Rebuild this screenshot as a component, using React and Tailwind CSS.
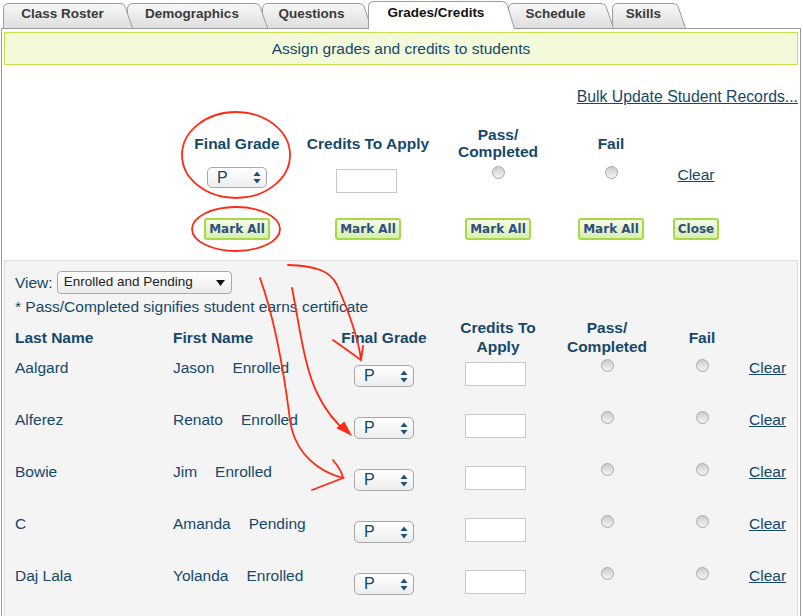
import React from "react";

const tabs = [
  { label: "Class Roster", w: 130, ml: "ml-[3px]", z: "z-[6]" },
  { label: "Demographics", w: 141, ml: "-ml-[6px]", z: "z-[5]" },
  { label: "Questions", w: 110, ml: "-ml-[6px]", z: "z-[4]" },
  { label: "Grades/Credits", w: 147, ml: "-ml-[4px]", z: "z-[10]", active: true },
  { label: "Schedule", w: 106, ml: "-ml-[7px]", z: "z-[3]" },
  { label: "Skills", w: 74, ml: "-ml-[2px]", z: "z-[2]" },
];

function Tab({ label, w, ml, z, active }) {
  const h = active ? 28 : 25;
  const s = 8;
  const d = `M0.5,${h} L0.5,6 Q0.5,0.5 6,0.5 L${w - s - 5},0.5 Q${w - s - 1},0.5 ${w - s},3.5 L${w - 0.5},${h}`;
  const id = active ? "tabA" : "tabI";
  return (
    <div
      className={`relative ${ml} ${z} ${active ? "h-[28px] -mb-[1px] pt-[4px] text-[#111]" : "h-[25px] pt-[3px] text-[#3a3a3a]"} flex justify-center text-[13.5px] font-bold leading-[16px]`}
      style={{ width: w, paddingRight: s + 3 }}
    >
      <svg className="absolute left-0 top-0" width={w} height={h}>
        <defs>
          <linearGradient id="tabI" x1="0" y1="0" x2="0" y2="1">
            <stop offset="0" stopColor="#f8f8f8" />
            <stop offset="1" stopColor="#dedede" />
          </linearGradient>
          <linearGradient id="tabA" x1="0" y1="0" x2="0" y2="1">
            <stop offset="0" stopColor="#ffffff" />
            <stop offset="1" stopColor="#ffffff" />
          </linearGradient>
        </defs>
        <path d={d + " Z"} fill={`url(#${id})`} stroke="none" />
        <path d={d} fill="none" stroke="#9c9c9c" strokeWidth="1" />
      </svg>
      <span className="relative">{label}</span>
    </div>
  );
}

function Updown() {
  return (
    <svg width="8" height="13" viewBox="0 0 8 13">
      <path d="M4,0.5 L7.5,5 L0.5,5 Z" fill="#1d4f79" />
      <path d="M4,12.5 L7.5,8 L0.5,8 Z" fill="#1d4f79" />
    </svg>
  );
}

function GradeSelect({ h = "h-[22px]", mt = "" }) {
  return (
    <div
      className={`${mt} w-[60px] ${h} rounded-[5px] border border-[#a8a8a8] bg-gradient-to-b from-white to-[#ededed] flex items-center justify-between pl-[9px] pr-[5px] text-[16px] text-[#13476b] leading-none`}
    >
      <span>P</span>
      <Updown />
    </div>
  );
}

function Radio({ mt = "" }) {
  return (
    <div className={`${mt} w-[13px] h-[13px] rounded-full border border-[#a8a8a8] bg-gradient-to-b from-[#cdcdcd] to-[#f3f3f3]`} />
  );
}

function TextBox({ mt = "", extra = "" }) {
  return <div className={`${mt} ${extra} w-[61px] h-[24px] border border-[#c8c8c8] bg-white`} />;
}

function MarkBtn({ children }) {
  return (
    <div className="h-[22px] px-[3px] rounded-[3px] border-2 border-[#a6d94a] bg-gradient-to-b from-[#f5fbe6] to-[#d8eeb0] flex items-center font-['DejaVu_Sans',Verdana,sans-serif] font-bold text-[12px] text-[#2f4f7f] leading-none">
      {children}
    </div>
  );
}

const students = [
  ["Aalgard", "Jason", "Enrolled"],
  ["Alferez", "Renato", "Enrolled"],
  ["Bowie", "Jim", "Enrolled"],
  ["C", "Amanda", "Pending"],
  ["Daj Lala", "Yolanda", "Enrolled"],
];

function Annotations() {
  return (
    <svg className="absolute left-0 top-0 z-30 pointer-events-none" width="803" height="616" fill="none" stroke="#ff2a14" strokeWidth="1.8" strokeLinecap="round">
      <ellipse cx="236" cy="155" rx="54" ry="43" />
      <ellipse cx="236" cy="229" rx="44" ry="22" />
      <path d="M288,265 C314,266 330,270 337,285 C348,310 358,335 361,360" />
      <path d="M333,340 L361,360 L363,346" />
      <path d="M292,288 C300,330 305,370 318,395 C328,415 338,425 347,432" />
      <path d="M338,428 L350,434 L344,423 Z" fill="#ff2a14" />
      <path d="M260,278 C275,320 285,380 290,420 C295,455 320,472 343,478 L312,490" />
      <path d="M333,460 C338,466 342,472 343,478" />
    </svg>
  );
}

export default function App() {
  return (
    <div className="relative w-[803px] h-[616px] overflow-hidden bg-white flex flex-col font-['Liberation_Sans',Arial,sans-serif] text-[#15486b]">
      <div className="relative z-10 h-[28px] flex items-end shrink-0">
        {tabs.map((t) => (
          <Tab key={t.label} {...t} />
        ))}
      </div>
      <div className="ml-[1px] w-[800px] flex-1 flex flex-col border border-b-0 border-[#9a9a9a] min-h-0">
        <div className="mx-[2px] mt-[3px] h-[33px] shrink-0 border border-[#c9e04a] bg-[#f3fad9] flex items-center justify-center text-[15.5px]">
          Assign grades and credits to students
        </div>
        <div className="mt-[23px] pr-[2px] flex justify-end text-[15.8px] leading-[17px] shrink-0">
          <span className="underline">Bulk Update Student Records...</span>
        </div>

        <div className="pl-[178px] shrink-0">
          <div className="mt-[21px] flex h-[34px] items-center font-bold text-[15.5px] leading-[17px] text-center">
            <div className="w-[114px] flex justify-center whitespace-nowrap">Final Grade</div>
            <div className="w-[148px] flex justify-center whitespace-nowrap">Credits To Apply</div>
            <div className="w-[112px] flex flex-col items-center whitespace-nowrap">
              <span>Pass/</span>
              <span>Completed</span>
            </div>
            <div className="w-[114px] flex justify-center">Fail</div>
            <div className="w-[56px]" />
          </div>
          <div className="flex h-[35px] items-start">
            <div className="w-[114px] flex justify-center">
              <GradeSelect h="h-[21px]" mt="mt-[7px]" />
            </div>
            <div className="w-[148px] flex justify-center">
              <TextBox mt="mt-[9px]" extra="mr-[4px]" />
            </div>
            <div className="w-[112px] flex justify-center">
              <Radio mt="mt-[6px]" />
            </div>
            <div className="w-[114px] flex justify-center">
              <Radio mt="mt-[6px]" />
            </div>
            <div className="w-[56px] flex justify-center mt-[6px] text-[15.5px] leading-[17px] underline">Clear</div>
          </div>
          <div className="mt-[23px] flex h-[22px]">
            <div className="w-[114px] flex justify-center"><MarkBtn>Mark All</MarkBtn></div>
            <div className="w-[148px] flex justify-center"><MarkBtn>Mark All</MarkBtn></div>
            <div className="w-[112px] flex justify-center"><MarkBtn>Mark All</MarkBtn></div>
            <div className="w-[114px] flex justify-center"><MarkBtn>Mark All</MarkBtn></div>
            <div className="w-[56px] flex justify-center"><MarkBtn>Close</MarkBtn></div>
          </div>
        </div>

        <div className="mx-[2px] mt-[20px] flex-1 border border-b-0 border-[#dcdcdc] bg-[#f4f4f4] pl-[10px] text-[15.5px]">
          <div className="mt-[10px] flex items-center h-[23px]">
            <span className="leading-[18px]">View:</span>
            <div className="ml-[4px] w-[175px] h-[23px] rounded-[4px] border border-[#a9a9a9] bg-gradient-to-b from-white to-[#ececec] flex items-center justify-between pl-[6px] pr-[6px] text-[13.5px] text-[#222]">
              <span>Enrolled and Pending</span>
              <svg width="9" height="6" viewBox="0 0 9 6">
                <path d="M0,0 L9,0 L4.5,6 Z" fill="#111" />
              </svg>
            </div>
          </div>
          <div className="mt-[4px] leading-[18px]">* Pass/Completed signifies student earns certificate</div>

          <div className="mt-[3px] flex h-[36px] items-center font-bold leading-[19px]">
            <div className="w-[158px]">Last Name</div>
            <div className="w-[167px]">First Name</div>
            <div className="w-[88px] flex justify-center whitespace-nowrap">Final Grade</div>
            <div className="w-[125px] pl-[15px] flex flex-col items-center whitespace-nowrap">
              <span>Credits To</span>
              <span>Apply</span>
            </div>
            <div className="w-[108px] flex flex-col items-center whitespace-nowrap">
              <span>Pass/</span>
              <span>Completed</span>
            </div>
            <div className="w-[82px] flex justify-center">Fail</div>
          </div>

          {students.map(([last, first, status]) => (
            <div key={last} className="flex h-[52px] items-start leading-[18px]">
              <div className="w-[158px] mt-[4px]">{last}</div>
              <div className="w-[167px] mt-[4px] flex">
                <span>{first}</span>
                <span className="ml-[18px]">{status}</span>
              </div>
              <div className="w-[88px] flex justify-center">
                <GradeSelect mt="mt-[10px]" />
              </div>
              <div className="w-[125px] pl-[10px] flex justify-center">
                <TextBox mt="mt-[7px]" />
              </div>
              <div className="w-[108px] flex justify-center">
                <Radio mt="mt-[4px]" />
              </div>
              <div className="w-[82px] flex justify-center">
                <Radio mt="mt-[4px]" />
              </div>
              <div className="pl-[6px] mt-[4px] underline">Clear</div>
            </div>
          ))}
        </div>
      </div>
      <Annotations />
    </div>
  );
}
